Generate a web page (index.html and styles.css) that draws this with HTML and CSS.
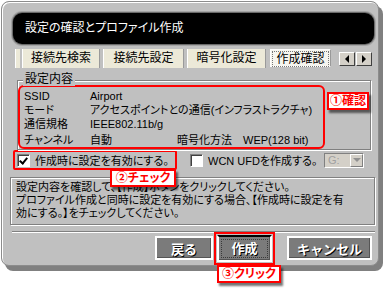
FILE: index.html
```html
<!DOCTYPE html>
<html lang="ja">
<head>
    <meta charset="UTF-8">
    <meta name="viewport" content="width=device-width, initial-scale=1.0">
    <title>設定の確認とプロファイル作成</title>
    <link rel="stylesheet" href="styles.css">
</head>
<body>
    <div class="stage">
        <div class="window">
            <div class="titlebar">設定の確認とプロファイル作成</div>

            <div class="tabs">
                <div class="tab-stub"></div>
                <div class="tab tab-1">接続先検索</div>
                <div class="tab tab-2">接続先設定</div>
                <div class="tab tab-3">暗号化設定</div>
                <div class="tab tab-active"><span>作成確認</span></div>
                <div class="tab-arrows">
                    <span class="arrow-btn"><span class="tri-left"></span></span>
                    <span class="arrow-btn"><span class="tri-right"></span></span>
                </div>
            </div>

            <div class="group">
                <div class="group-label">設定内容</div>
                <div class="info">
                    <div class="row"><span class="key">SSID</span><span>Airport</span></div>
                    <div class="row"><span class="key">モード</span><span>アクセスポイントとの通信(インフラストラクチャ)</span></div>
                    <div class="row"><span class="key">通信規格</span><span>IEEE802.11b/g</span></div>
                    <div class="row row-last"><span class="key">チャンネル</span><span class="val-short">自動</span><span class="key-2">暗号化方法</span><span>WEP(128 bit)</span></div>
                </div>
            </div>

            <div class="options">
                <label class="check check-mark"><span class="box"><span class="tick"></span></span>作成時に設定を有効にする。</label>
                <label class="check check-wcn"><span class="box"></span>WCN UFDを作成する。</label>
                <div class="combo"><span class="combo-text">G:</span><span class="combo-btn"><span class="tri-down"></span></span></div>
            </div>

            <div class="message">
                設定内容を確認して、【作成】ボタンをクリックしてください。<br>
                プロファイル作成と同時に設定を有効にする場合、【作成時に設定を有<br>
                効にする。】をチェックしてください。
            </div>

            <div class="separator"></div>

            <div class="buttons">
                <button class="btn btn-back">戻る</button>
                <div class="btn-mark"><button class="btn btn-create"><span>作成</span></button></div>
                <button class="btn btn-cancel">キャンセル</button>
            </div>
        </div>

        <div class="callout callout-1">①確認</div>
        <div class="callout callout-2">②チェック</div>
        <div class="callout callout-3">③クリック</div>
    </div>
</body>
</html>
```

FILE: styles.css
```css
body {
    margin: 0;
    background-color: #fff;
    font-family: "Liberation Sans", "Noto Sans CJK JP", sans-serif;
    font-size: 11px;
    font-feature-settings: "palt";
    color: #000;
}

.stage {
    position: relative;
    width: 386px;
    height: 293px;
    padding: 1px 0 0 1px;
    box-sizing: border-box;
}

.window {
    box-sizing: border-box;
    width: 378px;
    height: 265px;
    background-color: #c0c0c0;
    border: 1px solid #8c8c8c;
    border-radius: 8px;
    box-shadow: inset 1px 1px 0 #fff, 4px 5px 0 #808080;
}

.titlebar {
    height: 31px;
    margin: 11px 4px 0 11px;
    padding-left: 12px;
    background-color: #000;
    border-radius: 9px;
    box-shadow: 0 0 0 1px #6a6a6a, 0 0 0 2px #a4a4a4;
    color: #fff;
    font-size: 12px;
    line-height: 31px;
}

/* tabs */
.tabs {
    display: flex;
    height: 19px;
    margin: 5px 0 0 13px;
    font-size: 12px;
}

.tab-stub {
    width: 4px;
    background-color: #ece9d8;
    border-left: 1px solid #fff;
}

.tab {
    box-sizing: border-box;
    margin-left: 2px;
    background-color: #ece9d8;
    border-left: 1px solid #fff;
    border-right: 1px solid #9a9a9a;
    text-align: center;
    line-height: 19px;
    white-space: nowrap;
}

.tab-1 { width: 78px; }
.tab-2 { width: 81px; margin-left: 3px; }
.tab-3 { width: 79px; margin-left: 3px; }

.tab-active {
    width: 61px;
    height: 18px;
    margin-left: 4px;
    padding: 1px;
    background-color: #f6f5ef;
    border: 1px solid #fff;
    border-right-color: #9a9a9a;
    line-height: 14px;
}

.tab-active span {
    display: block;
    height: 14px;
    border: 1px dotted #777;
}

.tab-arrows {
    display: flex;
    gap: 1px;
    margin: 3px 0 0 8px;
}

.arrow-btn {
    box-sizing: border-box;
    width: 16px;
    height: 14px;
    display: flex;
    align-items: center;
    justify-content: center;
    background-color: #d4d0c8;
    border: 1px solid;
    border-color: #fff #404040 #404040 #fff;
}

.tri-left {
    border-top: 4px solid transparent;
    border-bottom: 4px solid transparent;
    border-right: 4px solid #000;
}

.tri-right {
    border-top: 4px solid transparent;
    border-bottom: 4px solid transparent;
    border-left: 4px solid #000;
}

/* group */
.group {
    position: relative;
    box-sizing: border-box;
    height: 70px;
    margin: 12px 7px 0 15px;
    padding-top: 4px;
    border: 1px solid #808080;
    box-shadow: inset 1px 1px 0 #fff, 1px 1px 0 #fff;
}

.group-label {
    position: absolute;
    top: -9px;
    left: 5px;
    padding: 0 2px;
    background-color: #c0c0c0;
    font-size: 12px;
    line-height: 14px;
}

.info {
    box-sizing: border-box;
    width: 307px;
    height: 64px;
    padding: 2px 0 0 4px;
    border: 2px solid #f00;
    border-radius: 6px;
}

.row {
    display: flex;
    line-height: 14px;
    white-space: nowrap;
}

.row-last {
    margin-top: 2px;
}

.key {
    width: 66px;
}

.val-short {
    width: 87px;
}

.key-2 {
    width: 66px;
}

/* options */
.options {
    display: flex;
    align-items: center;
    height: 20px;
    margin: 0 14px 0 11px;
    white-space: nowrap;
}

.check {
    display: flex;
    align-items: center;
    box-sizing: border-box;
    height: 20px;
}

.check-mark {
    width: 164px;
    padding-left: 2px;
    border: 2px solid #f00;
    border-radius: 2px;
}

.check-wcn {
    margin-left: 13px;
}

.box {
    position: relative;
    box-sizing: border-box;
    width: 13px;
    height: 13px;
    margin-right: 5px;
    background-color: #fff;
    border: 1px solid;
    border-color: #808080 #fff #fff #808080;
    box-shadow: inset 1px 1px 0 #404040;
}

.tick {
    position: absolute;
    left: 3px;
    top: 1px;
    width: 3px;
    height: 6px;
    border: solid #000;
    border-width: 0 2px 2px 0;
    transform: rotate(40deg);
}

.combo {
    display: flex;
    box-sizing: border-box;
    width: 40px;
    height: 15px;
    margin-left: auto;
    background-color: #d4d0c8;
    border: 1px solid;
    border-color: #808080 #fff #fff #808080;
}

.combo-text {
    flex: 1;
    padding-left: 3px;
    color: #a0a0a0;
    line-height: 13px;
}

.combo-btn {
    box-sizing: border-box;
    width: 13px;
    display: flex;
    align-items: center;
    justify-content: center;
    border: 1px solid;
    border-color: #fff #808080 #808080 #fff;
}

.tri-down {
    border-left: 4px solid transparent;
    border-right: 4px solid transparent;
    border-top: 4px solid #909090;
}

/* message */
.message {
    box-sizing: border-box;
    height: 48px;
    margin: 7px 3px 0 8px;
    padding: 3px 0 0 5px;
    border: 1px solid #808080;
    box-shadow: inset 1px 1px 0 #fff, 1px 1px 0 #fff;
    line-height: 13px;
    white-space: nowrap;
}

.separator {
    margin: 6px 3px 0 10px;
    border-top: 1px solid #808080;
    border-bottom: 1px solid #fff;
}

/* buttons */
.buttons {
    display: flex;
    align-items: flex-start;
    margin-left: 153px;
}

.btn {
    box-sizing: border-box;
    height: 24px;
    margin-top: 3px;
    padding: 0;
    background-color: #7b7b7b;
    border: 2px solid #fff;
    box-shadow: inset -1px -1px 0 #555;
    color: #fff;
    font-family: inherit;
    font-size: 13px;
    font-weight: bold;
    text-shadow: 1px 1px 0 #000;
}

.btn-back {
    width: 58px;
}

.btn-mark {
    margin: -1px 0 0 1px;
    padding: 1px;
    border: 2px solid #f00;
}

.btn-create {
    display: block;
    width: 55px;
    height: 27px;
    margin: 0;
    padding: 2px;
    border-top: 2px solid #000;
}

.btn-create span {
    display: block;
    height: 17px;
    line-height: 17px;
    border: 1px dotted #3a3a3a;
}

.btn-cancel {
    width: 85px;
    margin-left: 12px;
}

/* annotations */
.callout {
    position: absolute;
    z-index: 2;
    box-sizing: border-box;
    height: 18px;
    background-color: #fff;
    border: 2px solid #f00;
    box-shadow: 2px 3px 2px rgba(0, 0, 0, 0.55);
    color: #f00;
    font-size: 12px;
    font-weight: bold;
    line-height: 14px;
    text-align: center;
    white-space: nowrap;
}

.callout-1 { left: 327px; top: 92px; width: 42px; }
.callout-2 { left: 110px; top: 169px; width: 66px; }
.callout-3 { left: 217px; top: 265px; width: 64px; }
```
